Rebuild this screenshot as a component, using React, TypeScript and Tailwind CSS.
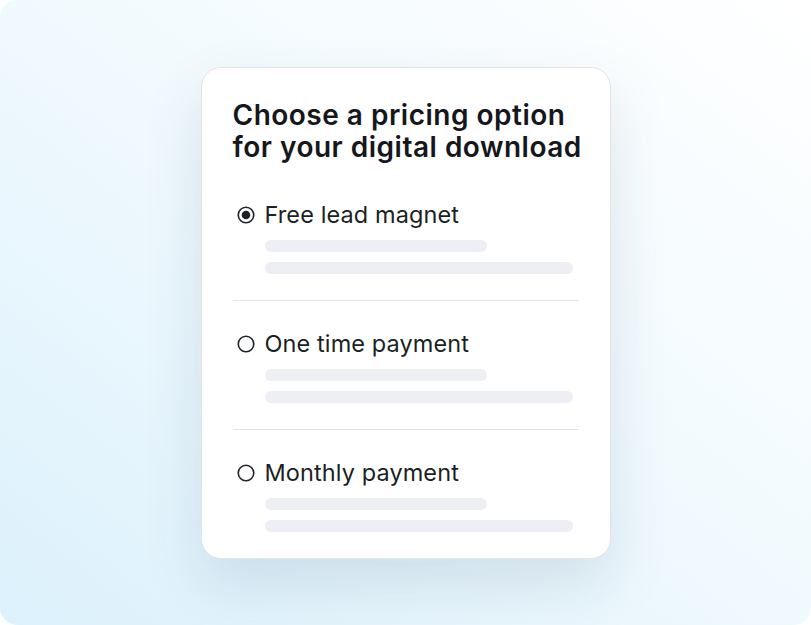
import React from "react";

function Radio({ checked }: { checked?: boolean }) {
  return (
    <svg width="18" height="18" viewBox="0 0 18 18" className="shrink-0">
      <circle cx="9" cy="9" r="7.75" fill="none" stroke="#1f2329" strokeWidth="1.6" />
      {checked && <circle cx="9" cy="9" r="4.3" fill="#1f2329" />}
    </svg>
  );
}

function Option({ label, checked, last }: { label: string; checked?: boolean; last?: boolean }) {
  return (
    <div className={last ? "pt-[29px]" : "pt-[29px] pb-[26px] border-b border-[#e3e3e6]"}>
      <div className="flex items-center gap-[10px] h-[28px] pl-[4px]">
        <Radio checked={checked} />
        <span className="text-[23.5px] leading-[28px] tracking-[0.1px] text-[#1c1f24] font-['Inter',sans-serif] whitespace-nowrap">
          {label}
        </span>
      </div>
      <div className="pl-[32px] mt-[11px] flex flex-col gap-[10px]">
        <div className="h-[12px] w-[222px] rounded-full bg-[#eeeff4]" />
        <div className="h-[12px] w-[308px] rounded-full bg-[#eeeff4]" />
      </div>
    </div>
  );
}

export default function App() {
  return (
    <div className="w-[811px] h-[625px] bg-white">
      <div className="w-[811px] h-[625px] rounded-[18px] bg-[linear-gradient(to_top_right,#dcf1fc,#f2fafe_55%,#ffffff)] flex items-start justify-center pt-[67px]">
        <div className="w-[410px] bg-white border border-[#e4e4e4] rounded-[20px] px-[31px] pt-[31px] pb-[26px] shadow-[0_26px_60px_rgba(20,70,100,0.13)] font-['Inter',sans-serif]">
          <h1 className="text-[28px] leading-[32px] font-semibold text-[#15171c] whitespace-nowrap tracking-[0.5px]">
            Choose a pricing option
            <br />
            for your digital download
          </h1>
          <div className="mt-[9px]">
            <Option label="Free lead magnet" checked />
            <Option label="One time payment" />
            <Option label="Monthly payment" last />
          </div>
        </div>
      </div>
    </div>
  );
}
